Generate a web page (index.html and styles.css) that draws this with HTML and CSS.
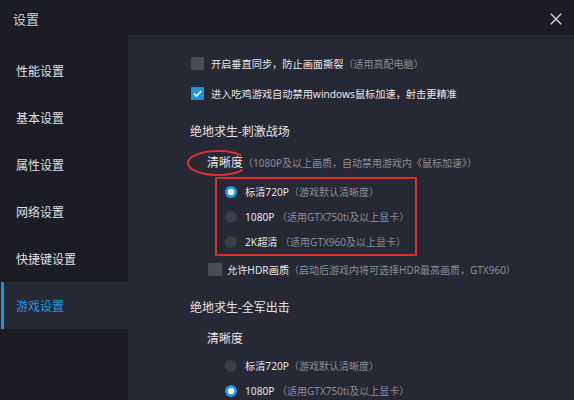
FILE: index.html
```
<!DOCTYPE html>
<html lang="zh-CN">
<head>
<meta charset="utf-8">
<title>设置</title>
<link rel="stylesheet" href="styles.css">
</head>
<body>
<div class="window">
  <header class="titlebar">
    <span class="title">设置</span>
    <svg class="close" viewBox="0 0 12 12"><path d="M0.8 0.8L11.2 11.2M11.2 0.8L0.8 11.2"/></svg>
  </header>
  <div class="main">
    <nav class="sidebar">
      <div class="nav-item">性能设置</div>
      <div class="nav-item">基本设置</div>
      <div class="nav-item">属性设置</div>
      <div class="nav-item">网络设置</div>
      <div class="nav-item">快捷键设置</div>
      <div class="nav-item active">游戏设置</div>
    </nav>
    <section class="content">
      <div class="check-row">
        <span class="cb"></span>
        <span class="txt">开启垂直同步，防止画面撕裂</span><span class="hint">（适用高配电脑）</span>
      </div>
      <div class="check-row">
        <span class="cb checked"><svg viewBox="0 0 13 13"><path d="M3 6.6L5.4 9L10.2 4"/></svg></span>
        <span class="txt">进入吃鸡游戏自动禁用windows鼠标加速，射击更精准</span>
      </div>

      <div class="heading first">绝地求生-刺激战场</div>
      <div class="label-row">
        <svg class="mark" viewBox="0 0 66 28"><path d="M55 6.3A30 12 0 1 0 56.6 20.9"/></svg>
        <span class="label">清晰度</span><span class="hint">（1080P及以上画质，自动禁用游戏内《鼠标加速》）</span>
      </div>
      <div class="radio-group marked">
        <div class="radio-row"><span class="radio on"></span><span class="txt">标清720P</span><span class="hint">（游戏默认清晰度）</span></div>
        <div class="radio-row"><span class="radio"></span><span class="txt">1080P</span><span class="hint"> （适用GTX750ti及以上显卡）</span></div>
        <div class="radio-row"><span class="radio"></span><span class="txt">2K超清</span><span class="hint"> （适用GTX960及以上显卡）</span></div>
      </div>
      <div class="check-row hdr">
        <span class="cb"></span>
        <span class="txt">允许HDR画质</span><span class="hint">（启动后游戏内将可选择HDR最高画质，GTX960）</span>
      </div>

      <div class="heading second">绝地求生-全军出击</div>
      <div class="label-row">
        <span class="label">清晰度</span>
      </div>
      <div class="radio-group plain">
        <div class="radio-row"><span class="radio"></span><span class="txt">标清720P</span><span class="hint">（游戏默认清晰度）</span></div>
        <div class="radio-row"><span class="radio on"></span><span class="txt">1080P</span><span class="hint"> （适用GTX750ti及以上显卡）</span></div>
        <div class="radio-row"><span class="radio"></span><span class="txt">2K超清</span><span class="hint"> （适用GTX960及以上显卡）</span></div>
      </div>
    </section>
  </div>
</div>
</body>
</html>
```
FILE: styles.css
```
* { box-sizing: border-box; }
html, body { margin: 0; padding: 0; }
body {
  background: #262834;
  font-family: "Noto Sans CJK SC", "Noto Sans", sans-serif;
  color: #e4e5e8;
}
.window {
  width: 574px;
  height: 400px;
  overflow: hidden;
  display: flex;
  flex-direction: column;
}
.titlebar {
  height: 35px;
  flex: none;
  background: #1b1c24;
  display: flex;
  align-items: center;
  justify-content: space-between;
  padding: 0 12px 0 13px;
}
.title {
  font-size: 13px;
  color: #cdced2;
  line-height: 1;
  margin-top: 1px;
}
.close {
  width: 12px;
  height: 12px;
  margin-top: 2px;
  fill: none;
  stroke: #cfd0d4;
  stroke-width: 1.5;
}
.main {
  flex: 1;
  display: flex;
  min-height: 0;
}
.sidebar {
  width: 128px;
  flex: none;
  background: #1b1c24;
  padding-top: 12px;
}
.nav-item {
  height: 47px;
  display: flex;
  align-items: center;
  padding-left: 16px;
  font-size: 12px;
  color: #dfe0e3;
}
.nav-item.active {
  margin-left: 1px;
  border-left: 3px solid #1596e0;
  padding-left: 12px;
  background: #262834;
  color: #1d9be4;
}
.content {
  flex: 1;
  padding: 13px 0 0 62px;
  font-family: "Noto Sans", "Noto Sans CJK SC", sans-serif;
  font-size: 10.2px;
}
.check-row {
  height: 30px;
  display: flex;
  align-items: center;
  margin-left: 1px;
  white-space: nowrap;
}
.check-row.hdr {
  height: 26px;
  margin-left: 18px;
}
.cb {
  width: 13px;
  height: 13px;
  flex: none;
  background: #4a4c56;
  border-radius: 1px;
  margin-right: 7px;
  display: flex;
}
.hdr .cb { width: 14px; height: 13px; margin-right: 5px; }
.cb.checked { background: #1b93e3; }
.cb svg {
  width: 13px;
  height: 13px;
  fill: none;
  stroke: #fff;
  stroke-width: 1.7;
}
.txt { color: #e6e7ea; }
.hint {
  color: #8b8d97;
  font-size: 10px;
  white-space: pre;
}
.heading {
  height: 24px;
  line-height: 24px;
  font-size: 12px;
  color: #e2e3e6;
}
.heading.first { margin-top: 12px; }
.heading.second { margin-top: 14px; }
.label-row {
  position: relative;
  margin-top: 6px;
  height: 24px;
  display: flex;
  align-items: center;
  padding-left: 17px;
  white-space: nowrap;
}
.label {
  font-size: 12px;
  color: #e6e7ea;
}
.mark {
  position: absolute;
  left: -4px;
  top: -1px;
  width: 66px;
  height: 28px;
  fill: none;
  stroke: #d8322d;
  stroke-width: 2;
  overflow: visible;
}
.radio-group {
  margin: 3px 0 0 25px;
  width: 202px;
  border: 2px solid transparent;
  padding-left: 8px;
}
.radio-group.marked { border-color: #d6312c; }
.radio-group.plain { margin-top: 1px; }
.radio-row {
  height: 25px;
  display: flex;
  align-items: center;
  white-space: nowrap;
}
.radio {
  width: 12px;
  height: 12px;
  flex: none;
  border-radius: 50%;
  background: #3a3c47;
  margin-right: 8px;
}
.radio.on {
  background: radial-gradient(circle, #ffffff 0 3px, #1a9be8 3.6px);
}
```
